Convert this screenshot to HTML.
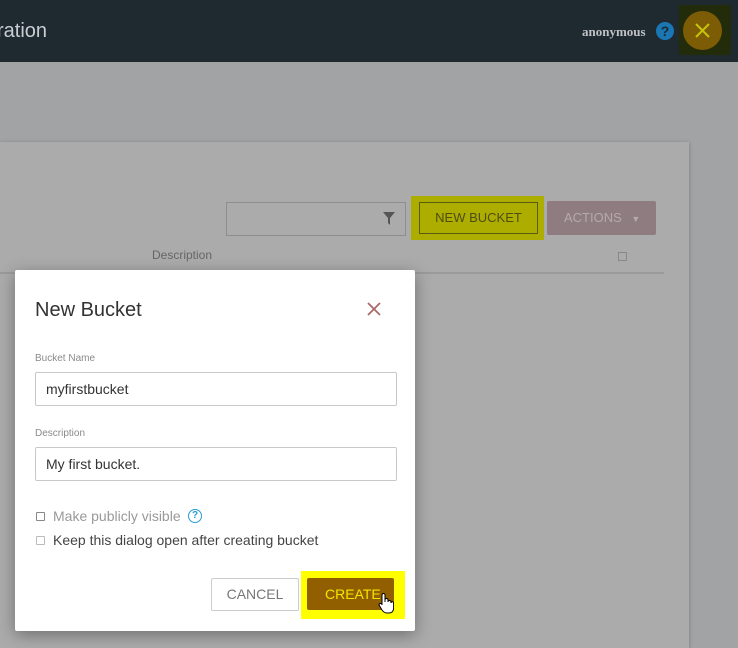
<!DOCTYPE html>
<html><head><style>
*{box-sizing:border-box;margin:0;padding:0}
html,body{width:738px;height:648px;overflow:hidden}
body{background:#a2a3a4;font-family:"Liberation Sans",Arial,sans-serif;position:relative}
.hdr{position:absolute;left:0;top:0;width:738px;height:62px;background:#1f2930}
.abs{position:absolute}
.panel{position:absolute;left:0;top:142px;width:689px;height:506px;background:#ababab;box-shadow:0 1px 4px rgba(0,0,0,.25)}
.dlg{position:absolute;left:15px;top:270px;width:400px;height:361px;background:#fff;border-radius:2px;box-shadow:0 4px 16px rgba(0,0,0,.35)}
.lbl{position:absolute;font-size:11px;color:#8a8a8a}
.inp{position:absolute;left:20px;width:362px;height:34px;border:1px solid #c8c8c8;border-radius:2px;font-size:14px;color:#333;padding:8px 10px}
.cb{position:absolute;left:21px;width:9px;height:9px;border:1.5px solid #888;border-radius:1px}
</style></head><body>
<div class="hdr">
<div class="abs" style="left:-3px;top:20px;font-size:20px;color:#c9ced1">ration</div>
<div class="abs" style="left:582px;top:24px;font-size:13px;font-family:'Liberation Serif',serif;font-weight:bold;color:#bfc3c6">anonymous</div>
<div class="abs" style="left:656px;top:22px;width:18px;height:18px;border-radius:50%;background:#1b76b4;color:#1f2930;font-size:14px;font-weight:bold;text-align:center;line-height:18px">?</div>
<div class="abs" style="left:679px;top:5px;width:52px;height:50px;background:#232c0a"></div>
<div class="abs" style="left:683px;top:11px;width:39px;height:39px;border-radius:50%;background:#7d5c06"></div>
<svg class="abs" style="left:683px;top:11px" width="39" height="39"><path d="M13 13L26 26M26 13L13 26" stroke="#c7c20a" stroke-width="2"/></svg>
</div>
<div class="panel"></div>
<div class="abs" style="left:226px;top:202px;width:180px;height:34px;border:1px solid #8e8e8e;background:#ababab"></div>
<svg class="abs" style="left:383px;top:212px" width="12" height="13"><path d="M0 0H12L7 6V13L5 11V6Z" fill="#555"/></svg>
<div class="abs" style="left:411px;top:196px;width:133px;height:44px;background:#adad00"></div>
<div class="abs" style="left:419px;top:202px;width:119px;height:32px;border:1px solid #5a5a10;color:#4f4d10;font-size:13px;text-align:center;line-height:30px">NEW BUCKET</div>
<div class="abs" style="left:547px;top:201px;width:109px;height:34px;background:#8e7c80;border-radius:2px;color:#b5a9ab;font-size:13px;line-height:34px;padding-left:17px">ACTIONS <span style="font-size:9px;margin-left:6px">▼</span></div>
<div class="abs" style="left:152px;top:248px;font-size:12px;color:#666">Description</div>
<div class="abs" style="left:618px;top:252px;width:9px;height:9px;border:1px solid #888"></div>
<div class="abs" style="left:0;top:272px;width:664px;height:2px;background:#9a9a9a"></div>
<div class="dlg">
<div class="abs" style="left:20px;top:29px;font-size:20px;color:#333">New Bucket</div>
<svg class="abs" style="left:352px;top:32px" width="14" height="14"><path d="M1 1L13 13M13 1L1 13" stroke="#a86a6a" stroke-width="1.8"/></svg>
<div class="lbl" style="left:20px;top:83px;font-size:10px">Bucket Name</div>
<div class="inp" style="top:102px">myfirstbucket</div>
<div class="lbl" style="left:20px;top:158px;font-size:10px">Description</div>
<div class="inp" style="top:177px">My first bucket.</div>
<div class="cb" style="top:242px"></div>
<div class="abs" style="left:38px;top:238px;font-size:14px;color:#999">Make publicly visible</div>
<div class="abs" style="left:173px;top:239px;width:14px;height:14px;border:1.5px solid #2a9ad6;border-radius:50%;color:#2a9ad6;font-size:10px;font-weight:bold;text-align:center;line-height:11px">?</div>
<div class="cb" style="top:266px;border-color:#bbb;border-width:1px"></div>
<div class="abs" style="left:38px;top:262px;font-size:14px;color:#444">Keep this dialog open after creating bucket</div>
<div class="abs" style="left:196px;top:308px;width:88px;height:33px;border:1px solid #ccc;border-radius:2px;font-size:14px;color:#777;text-align:center;line-height:31px">CANCEL</div>
<div class="abs" style="left:286px;top:301px;width:104px;height:48px;background:#ffff00"></div>
<div class="abs" style="left:292px;top:308px;width:87px;height:32px;background:#925f00;border-radius:2px;font-size:14px;color:#f2e700;line-height:32px;padding-left:18px">CREATE</div>
<svg class="abs" style="left:363px;top:322px" width="16" height="22"><path d="M4 13V3a1.5 1.5 0 0 1 3 0V10V8a1.5 1.5 0 0 1 3 0V10a1.5 1.5 0 0 1 3 0V11a1.3 1.3 0 0 1 2.6 0V16q0 5-5 5H9q-3 0-5-3L1 13a1.4 1.4 0 0 1 3 0Z" fill="#fff" stroke="#000" stroke-width="1"/></svg>
</div>
</body></html>
